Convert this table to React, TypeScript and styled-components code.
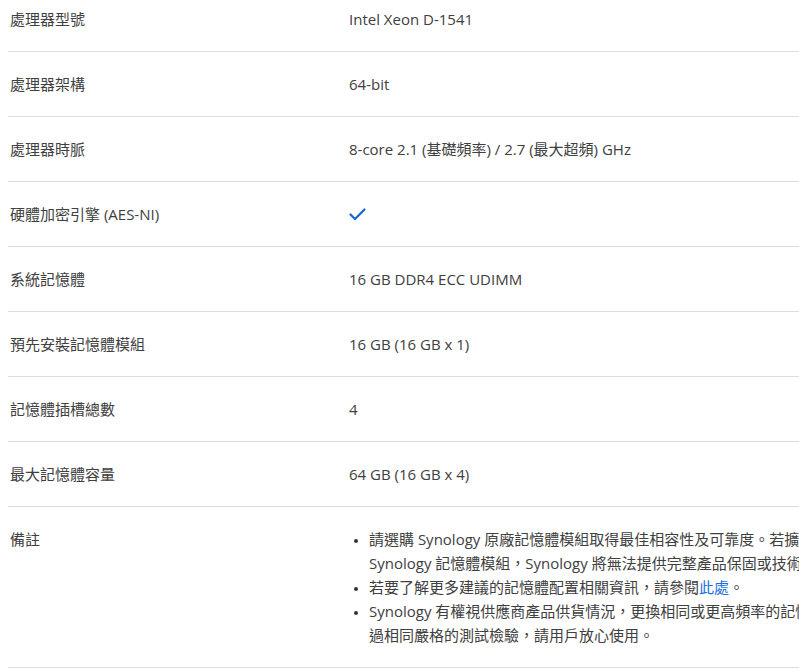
import styled, { createGlobalStyle } from 'styled-components';

type Spec = {
  label: string;
  value: React.ReactNode;
};

const GlobalStyle = createGlobalStyle`
  html, body {
    margin: 0;
    overflow: hidden;
    background: #fff;
  }
  body {
    padding: 0 0 0 8px;
    font-family: "Open Sans", "Noto Sans CJK TC", sans-serif;
    font-size: 15px;
    color: #404040;
  }
`;

const CheckMark = () => (
  <svg width="17" height="13" viewBox="0 0 17 13" fill="none">
    <polyline
      points="1.5,6.5 6,11 15.5,1.5"
      stroke="#1565d8"
      strokeWidth="2.2"
      strokeLinecap="round"
      strokeLinejoin="round"
    />
  </svg>
);

const specs: Spec[] = [
  { label: '處理器型號', value: 'Intel Xeon D-1541' },
  { label: '處理器架構', value: '64-bit' },
  { label: '處理器時脈', value: '8-core 2.1 (基礎頻率) / 2.7 (最大超頻) GHz' },
  { label: '硬體加密引擎 (AES-NI)', value: <CheckMark /> },
  { label: '系統記憶體', value: '16 GB DDR4 ECC UDIMM' },
  { label: '預先安裝記憶體模組', value: '16 GB (16 GB x 1)' },
  { label: '記憶體插槽總數', value: '4' },
  { label: '最大記憶體容量', value: '64 GB (16 GB x 4)' },
];

export default function App() {
  return (
    <>
      <GlobalStyle />
      <Table>
        {specs.map((spec) => (
          <Row key={spec.label}>
            <Label>{spec.label}</Label>
            <Value>{spec.value}</Value>
          </Row>
        ))}
        <Row>
          <Label>備註</Label>
          <Value>
            <Notes>
              <li>
                請選購 Synology 原廠記憶體模組取得最佳相容性及可靠度。若擴充非
                <br />
                Synology 記憶體模組，Synology 將無法提供完整產品保固或技術支援。
              </li>
              <li>
                若要了解更多建議的記憶體配置相關資訊，請參閱<Link href="#">此處</Link>。
              </li>
              <li>
                Synology 有權視供應商產品供貨情況，更換相同或更高頻率的記憶體模組，且皆經
                <br />
                過相同嚴格的測試檢驗，請用戶放心使用。
              </li>
            </Notes>
          </Value>
        </Row>
      </Table>
    </>
  );
}

const Table = styled.div`
  width: 1150px;
  margin-top: -13px;
`;

const Row = styled.div`
  display: grid;
  grid-template-columns: 341px 1fr;
  padding: 20px 0;
  border-bottom: 1px solid #dcdcdc;
  line-height: 24px;
`;

const Label = styled.div`
  padding-left: 2px;
`;

const Value = styled.div`
  display: flex;
  align-items: center;
  min-height: 24px;
  white-space: nowrap;
`;

const Notes = styled.ul`
  margin: 0;
  padding-left: 20px;

  & > li::marker {
    color: #333;
    font-size: 12px;
  }
`;

const Link = styled.a`
  color: #1a6fdf;
  text-decoration: none;
`;
